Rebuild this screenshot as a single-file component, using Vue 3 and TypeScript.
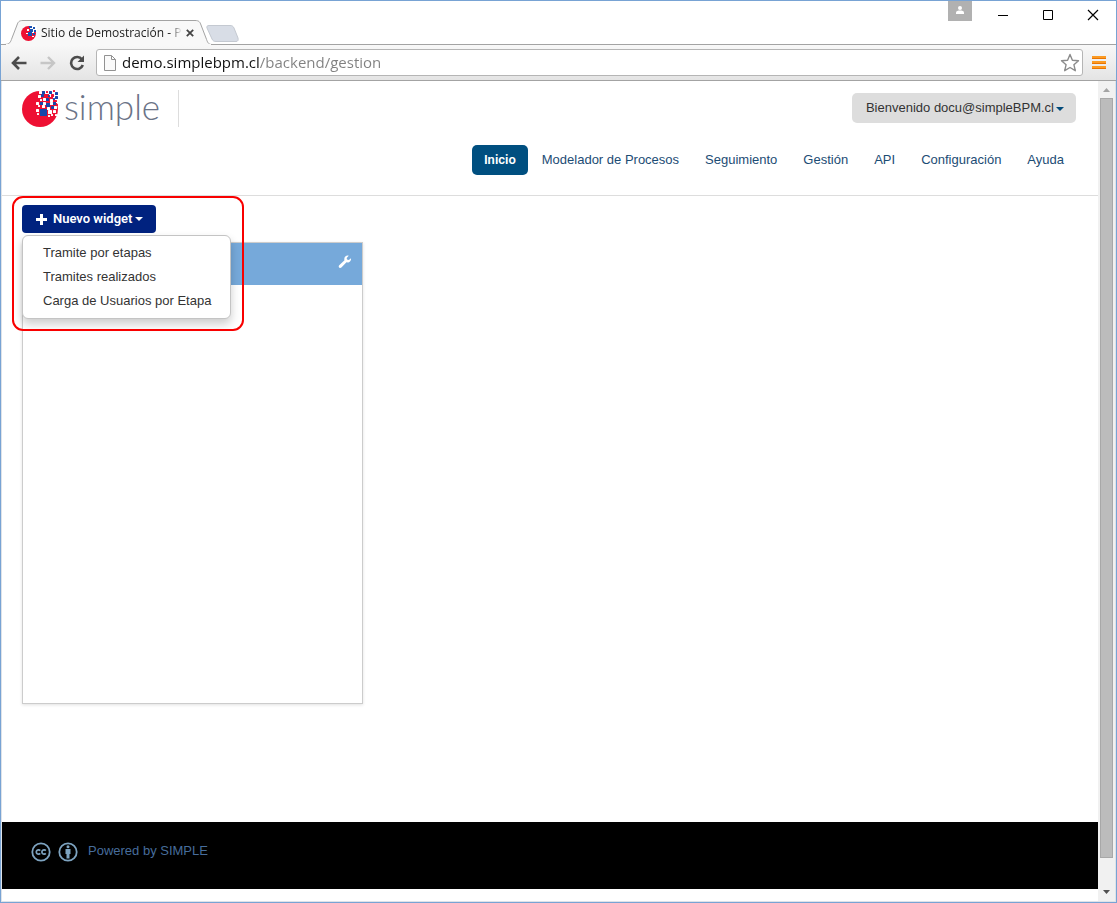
<script setup lang="ts">
import { ref } from 'vue'

interface Pixel {
  x: number
  y: number
  s: number
  c: string
}

const address = ref('demo.simplebpm.cl/backend/gestion')
const navItems: string[] = [
  'Inicio',
  'Modelador de Procesos',
  'Seguimiento',
  'Gestión',
  'API',
  'Configuración',
  'Ayuda',
]
const activeItem = ref('Inicio')
const menuOpen = ref(true)
const widgetTypes: string[] = ['Tramite por etapas', 'Tramites realizados', 'Carga de Usuarios por Etapa']

const W = '#ffffff'
const B = '#1646ab'
const R = '#ee1033'
const cells: [number, number, number, string][] = [
  [17, 1, 3, W], [20, 1, 3, B], [24, 1, 2, R], [27, 1, 3, B], [31, 0, 2, R], [33, 2, 3, B],
  [16, 5, 3, W], [19, 4, 3, B], [23, 5, 3, R], [26, 5, 2, B], [29, 4, 3, R], [33, 6, 3, B],
  [18, 9, 2, W], [21, 8, 3, W], [24, 8, 3, B], [28, 9, 3, W], [31, 8, 2, B], [33, 10, 2, R],
  [14, 12, 3, W], [18, 12, 3, B], [21, 12, 3, W], [24, 13, 4, B], [28, 12, 3, W], [31, 12, 3, B], [34, 14, 2, R],
  [16, 15, 2, W], [20, 15, 3, W], [25, 17, 3, W], [29, 16, 3, B], [32, 16, 3, W],
  [14, 19, 3, W], [26, 20, 4, W], [31, 20, 3, W], [33, 24, 2, W],
  [18, 19, 7, B], [15, 23, 2, W], [26, 25, 2, W], [29, 24, 2, W],
]
const pixels: Pixel[] = cells.map(([x, y, s, c]) => ({ x, y, s, c }))
</script>

<template>
  <div class="window">
    <header class="titlebar">
      <div class="tab">
        <svg class="tab-shape" width="208" height="25" viewBox="0 0 208 25" aria-hidden="true">
          <path d="M0 24.500C6 24.500 6.500 22 8 18L13 5C14 2 15 .5 19 .5H191C195 .5 196 2 197 5L202 18C203.500 22 204 24.500 208 24.500" fill="#f8f8f8" stroke="#a3a3a3" />
          <path d="M2 25H207" stroke="#f8f8f8" stroke-width="2" />
        </svg>
        <div class="tab-content">
          <svg class="favicon" width="16" height="16" viewBox="0 0 16 16" aria-hidden="true">
            <circle cx="7.500" cy="8.500" r="7.500" fill="#ee1033" />
            <path d="M9 0h7v7h-7z" fill="#fff" />
            <path d="M8 1h3v2h-3zM12 2h2v2h-2zM9 4h3v3h-3zM13 5h2v2h-2zM7 7h4v4h-4zM12 8h2v2h-2z" fill="#1950b0" />
            <path d="M6 4h2v2h-2zM11 7h2v1h-2zM5 8h2v1h-2zM11 11h2v1h-2z" fill="#fff" />
          </svg>
          <span class="tab-title">Sitio de Demostración - Po</span>
          <button class="tab-close" aria-label="Cerrar pestaña">
            <svg width="8" height="8" viewBox="0 0 8 8"><path d="M.8.8l6.400 6.400M7.200.8L.8 7.200" stroke="#444" stroke-width="1.800" /></svg>
          </button>
        </div>
      </div>
      <button class="new-tab" aria-label="Nueva pestaña">
        <svg width="33" height="17" viewBox="0 0 33 17"><path d="M3 .5H24C26 .5 27 1 28 3L32 13C32.500 15 32 16.500 30 16.500H10C8 16.500 7 16 6 14L1 3C.5 1.500 1 .5 3 .5Z" fill="#d8dde6" stroke="#c4c9d1" /></svg>
      </button>
      <div class="window-controls">
        <button class="profile" aria-label="Usuario">
          <svg width="24" height="20" viewBox="0 0 24 20"><rect width="24" height="20" fill="#b1b1b1" /><circle cx="12" cy="7" r="2" fill="#fff" /><path d="M8 13v-1.500C8 10 10 9.500 12 9.500s4 .5 4 2V13z" fill="#fff" /></svg>
        </button>
        <button class="control" aria-label="Minimizar"><svg width="12" height="12" viewBox="0 0 12 12"><path d="M1 6.500h10" stroke="#000" /></svg></button>
        <button class="control" aria-label="Maximizar"><svg width="12" height="12" viewBox="0 0 12 12"><path d="M1.500 1.500h9v9h-9z" fill="none" stroke="#000" /></svg></button>
        <button class="control" aria-label="Cerrar"><svg width="12" height="12" viewBox="0 0 12 12"><path d="M1 1l10 10M11 1L1 11" stroke="#000" stroke-width="1.200" /></svg></button>
      </div>
    </header>

    <div class="toolbar">
      <button class="tool" aria-label="Atrás">
        <svg width="18" height="16" viewBox="0 0 18 16"><path d="M16.500 8H4M9 2L3 8l6 6" fill="none" stroke="#4c4c4c" stroke-width="2.600" /></svg>
      </button>
      <button class="tool" aria-label="Adelante" disabled>
        <svg width="18" height="16" viewBox="0 0 18 16"><path d="M1.500 8H14M9 2l6 6-6 6" fill="none" stroke="#c6c6c6" stroke-width="2.400" /></svg>
      </button>
      <button class="tool" aria-label="Recargar">
        <svg width="18" height="16" viewBox="0 0 18 16"><path d="M14 4.500A6 6 0 1 0 14.800 10" fill="none" stroke="#4c4c4c" stroke-width="2.600" /><path d="M16 .5V7H9.500z" fill="#4c4c4c" /></svg>
      </button>
      <div class="address">
        <svg class="page-icon" width="12" height="16" viewBox="0 0 12 16" aria-hidden="true"><path d="M.5.5H7.500L11.500 4.500V15.500H.5zM7.500.5V4.500H11.500" fill="#fafafa" stroke="#929292" /></svg>
        <input v-model="address" class="url" type="text" aria-label="Dirección" />
        <button class="star" aria-label="Marcador">
          <svg width="20" height="20" viewBox="0 0 20 20"><path d="M10 1.500l2.400 5.700 6.100.5-4.600 4 1.400 6L10 14.500l-5.300 3.200 1.400-6-4.600-4 6.100-.5z" fill="#fff" stroke="#8b8b8b" stroke-width="1.400" stroke-linejoin="round" /></svg>
        </button>
      </div>
      <button class="menu-button" aria-label="Menú">
        <svg width="14" height="14" viewBox="0 0 14 14"><path d="M0 1.500h14M0 6.500h14M0 11.500h14" stroke="#fb9a22" stroke-width="3" /><path d="M0 2.500h14M0 7.500h14M0 12.500h14" stroke="#e87502" /></svg>
      </button>
    </div>

    <div class="viewport">
      <div class="page">
        <header class="site-header">
          <div class="brand-row">
            <a class="brand" href="#" aria-label="simple">
              <svg width="37" height="37" viewBox="0 0 37 37" aria-hidden="true">
                <circle cx="18" cy="19" r="18" fill="#ee1033" />
                <path d="M23 0h14v13h-3v-3h-3V7h-4V4h-4z" fill="#fff" />
                <rect v-for="(p, i) in pixels" :key="i" :x="p.x" :y="p.y" :width="p.s" :height="p.s" :fill="p.c" rx="0.500" />
              </svg>
              <span class="wordmark">simple</span>
            </a>
            <button class="account">Bienvenido docu@simpleBPM.cl<span class="caret"></span></button>
          </div>
          <nav class="site-nav">
            <a v-for="item in navItems" :key="item" href="#" :class="{ active: item === activeItem }" @click.prevent="activeItem = item">{{ item }}</a>
          </nav>
        </header>

        <main class="content">
          <div class="dropdown">
            <button class="new-widget" :aria-expanded="menuOpen" @click="menuOpen = !menuOpen">
              <svg width="12" height="12" viewBox="0 0 12 12" aria-hidden="true"><path d="M6.500 1v11M1 6.500h11" stroke="#fff" stroke-width="3" /></svg>
              Nuevo widget<span class="caret"></span>
            </button>
            <ul v-if="menuOpen" class="dropdown-menu">
              <li v-for="type in widgetTypes" :key="type"><a href="#">{{ type }}</a></li>
            </ul>
            <div class="highlight"></div>
          </div>
          <section class="widget">
            <div class="widget-head">
              <button aria-label="Configurar">
                <svg width="14" height="14" viewBox="0 0 14 14"><path d="M13 3.200L10.800 5 9 4.600 8.700 3 10.700.8C8.700.1 6.300 1.500 6.300 4c0 .5 0 .9.200 1.300L1.200 10.200C.2 11.200.8 13 2.200 13c.5 0 .9-.2 1.200-.5L8.500 7.300c2.600.7 5-1.400 4.500-4.100z" fill="#fff" /></svg>
              </button>
            </div>
          </section>
        </main>

        <footer class="site-footer">
          <svg width="20" height="20" viewBox="0 0 20 20" aria-hidden="true"><circle cx="10" cy="10" r="8.700" fill="none" stroke="#7da3c0" stroke-width="1.800" /><path d="M9.200 8.600A2.200 2.200 0 1 0 9.200 11.400M14.800 8.600A2.200 2.200 0 1 0 14.800 11.400" fill="none" stroke="#7da3c0" stroke-width="1.700" /></svg>
          <svg width="20" height="20" viewBox="0 0 20 20" aria-hidden="true"><circle cx="10" cy="10" r="8.700" fill="none" stroke="#7da3c0" stroke-width="1.800" /><circle cx="10" cy="4.800" r="1.500" fill="#7da3c0" /><path d="M7.500 7h5v5h-1v4.500h-3V12h-1z" fill="#7da3c0" /></svg>
          <a href="#">Powered by SIMPLE</a>
        </footer>
      </div>
      <div class="scrollbar" aria-hidden="true">
        <svg width="17" height="17" viewBox="0 0 17 17"><path d="M5 11h7L8.500 7z" fill="#a3a3a3" /></svg>
        <div class="thumb"></div>
        <svg class="down" width="17" height="17" viewBox="0 0 17 17"><path d="M5 6h7L8.500 10z" fill="#505050" /></svg>
      </div>
    </div>
  </div>
</template>

<style>
body {
  margin: 0;
}
</style>

<style scoped>
* {
  box-sizing: border-box;
}
button {
  padding: 0;
  border: 0;
  background: none;
  font: inherit;
}
svg {
  display: block;
  flex: none;
}
a {
  color: #1c4c74;
  text-decoration: none;
}
.window {
  display: flex;
  flex-direction: column;
  height: 100vh;
  min-height: 600px;
  border: 1px solid #78a3d4;
  background: #fff;
  font: 13px/20px "Liberation Sans", Arial, sans-serif;
  color: #333;
}
.titlebar {
  display: flex;
  align-items: flex-end;
  height: 44px;
  padding: 0 1px 0 3px;
  border-bottom: 1px solid #a3a3a3;
}
.tab {
  position: relative;
  width: 208px;
  height: 25px;
  margin-bottom: -1px;
}
.tab-shape {
  position: absolute;
  inset: 0;
}
.tab-content {
  position: relative;
  display: flex;
  align-items: center;
  height: 25px;
  padding: 0 18px 0 17px;
}
.tab-title {
  flex: 1;
  margin-left: 4px;
  overflow: hidden;
  white-space: nowrap;
  font: 12px/20px "Open Sans", "Noto Sans", sans-serif;
  color: #222;
  mask-image: linear-gradient(to right, #000 calc(100% - 12px), transparent);
}
.tab-close {
  margin-left: 4px;
}
.new-tab {
  margin: 0 0 2px -6px;
}
.window-controls {
  display: flex;
  align-self: flex-start;
  margin-left: auto;
}
.profile {
  height: 20px;
  margin-right: 8px;
}
.control {
  display: grid;
  place-items: center;
  width: 45px;
  height: 28px;
}
.toolbar {
  display: flex;
  align-items: center;
  gap: 11px;
  height: 36px;
  padding: 0 10px 0 9px;
  border-bottom: 1px solid #a3a3a3;
  background: linear-gradient(#f8f8f8, #e4e4e4);
}
.address {
  display: flex;
  align-items: center;
  flex: 1;
  height: 27px;
  margin-left: -1px;
  padding: 0 2px 0 7px;
  border: 1px solid #b5b5b5;
  border-radius: 3px;
  background: #fff;
}
.url {
  flex: 1;
  min-width: 0;
  height: 25px;
  padding: 0 6px 2px;
  border: 0;
  outline: 0;
  font: 15px/22px "Open Sans", "Noto Sans", sans-serif;
  color: transparent;
  background: linear-gradient(to right, #111 144px, #808080 144px);
  background-clip: text;
}
.menu-button {
  margin-left: -2px;
}
.viewport {
  display: flex;
  flex: 1;
  min-height: 0;
  border: 1px solid #dfe3e8;
  border-top: 0;
}
.page {
  display: flex;
  flex-direction: column;
  flex: 1;
  min-width: 0;
  padding-bottom: 12px;
}
.site-header {
  height: 115px;
  padding: 9px 22px 0 20px;
  border-bottom: 1px solid #ddd;
}
.brand-row {
  display: flex;
  justify-content: space-between;
  align-items: flex-start;
}
.brand {
  display: flex;
  height: 37px;
  padding-right: 18px;
  border-right: 1px solid #ddd;
}
.wordmark {
  margin-left: 5px;
  font: 300 35px/32px Lato, "Open Sans", sans-serif;
  color: #6b7387;
}
.account {
  height: 30px;
  margin-top: 3px;
  padding: 0 12px 0 14px;
  border-radius: 5px;
  background: #ddd;
  color: #333;
}
.caret {
  display: inline-block;
  margin-left: 2px;
  border: 4px solid transparent;
  border-top-color: #024b7a;
  border-bottom: 0;
  vertical-align: middle;
}
.site-nav {
  display: flex;
  justify-content: flex-end;
  gap: 2px;
  margin-top: 18px;
}
.site-nav a {
  padding: 5px 12px;
  border-radius: 5px;
}
.site-nav .active {
  background: #004f80;
  color: #fff;
  font-family: Roboto, sans-serif;
  font-weight: 600;
}
.content {
  flex: 1;
  padding: 9px 20px;
}
.dropdown {
  position: relative;
  width: max-content;
}
.new-widget {
  display: flex;
  align-items: center;
  height: 28px;
  padding: 0 13px;
  border-radius: 4px;
  background: #00227f;
  color: #fff;
  font-family: Roboto, sans-serif;
  font-weight: 600;
}
.new-widget svg {
  margin-right: 6px;
}
.new-widget .caret {
  margin-left: 3px;
  border-top-color: #fff;
}
.dropdown-menu {
  position: absolute;
  top: 30px;
  left: 0;
  z-index: 2;
  margin: 0;
  padding: 5px 0;
  border: 1px solid #c4c4c4;
  border-radius: 6px;
  background: #fff;
  box-shadow: 0 5px 10px rgba(0, 0, 0, 0.2);
  list-style: none;
  white-space: nowrap;
}
.dropdown-menu a {
  display: block;
  padding: 2px 19px 2px 20px;
  color: #333;
}
.highlight {
  position: absolute;
  top: -9px;
  left: -10px;
  z-index: 3;
  width: 232px;
  height: 135px;
  border: 2px solid #f90000;
  border-radius: 11px;
  pointer-events: none;
}
.widget {
  width: 341px;
  height: 462px;
  margin-top: 9px;
  border: 1px solid #ccc;
  box-shadow: 0 1px 3px rgba(0, 0, 0, 0.12);
}
.widget-head {
  display: flex;
  justify-content: flex-end;
  height: 42px;
  padding: 12px 10px;
  background: #76a9da;
}
.widget-head button {
  height: 14px;
}
.site-footer {
  display: flex;
  gap: 7px;
  height: 67px;
  padding: 20px 29px;
  background: #000;
}
.site-footer a {
  margin: -1px 0 0 3px;
  color: #476d9c;
}
.scrollbar {
  display: flex;
  flex-direction: column;
  width: 17px;
  background: #f1f1f1;
}
.thumb {
  flex: 1;
  margin: 0 2px;
  border: 1px solid #a8a8a8;
  background: #bcbcbc;
}
.down {
  margin-top: 26px;
}
</style>
